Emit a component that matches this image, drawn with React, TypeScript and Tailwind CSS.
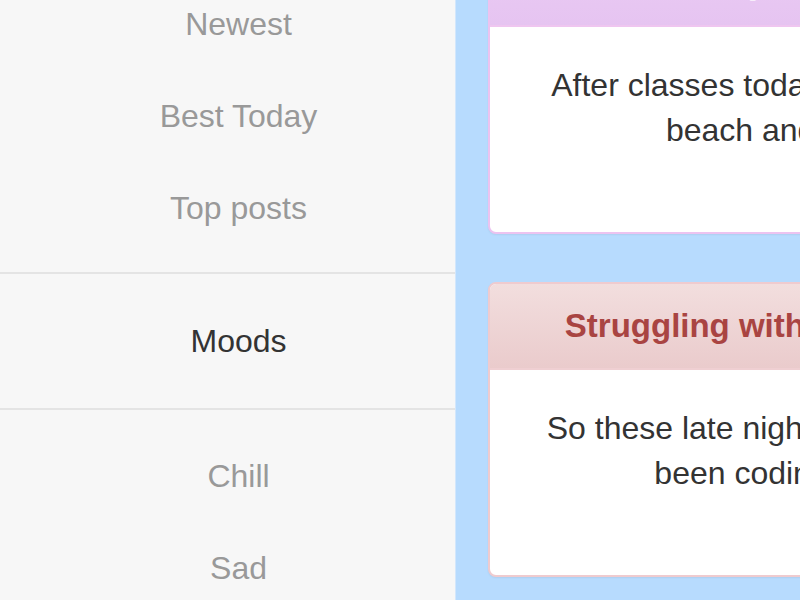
import React from "react";

const font = { fontFamily: '"Liberation Sans", Arial, Helvetica, sans-serif' };

function NavItem({ label, active = false }: { label: string; active?: boolean }) {
  return (
    <div
      className={`h-[92px] flex items-center justify-center pl-[22px] text-[32px] ${
        active ? "text-[#333333]" : "text-[#999999]"
      }`}
    >
      {label}
    </div>
  );
}

function Panel({
  title,
  lines,
  variant,
}: {
  title: string;
  lines: string[];
  variant: "purple" | "red";
}) {
  const purple = variant === "purple";
  return (
    <div
      className={`w-[612px] shrink-0 rounded-[8px] border-2 bg-white overflow-hidden shadow-[0_1px_2px_rgba(0,0,0,0.06)] ${
        purple ? "border-[#ecc3f0]" : "border-[#efcbcf]"
      }`}
    >
      <div
        className={`h-[86px] flex items-center justify-center border-b-2 text-[33px] font-bold whitespace-nowrap ${
          purple
            ? "bg-linear-to-b from-[#ebcdf5] to-[#e6c4f1] border-[#efc6f0] text-white/70"
            : "bg-linear-to-b from-[#f2dede] to-[#eacbcc] border-[#efcfd2] text-[#a94442]"
        }`}
      >
        {title}
      </div>
      <div className="h-[205px] pt-[36px] px-[30px] text-center text-[32px] leading-[45px] text-[#333333] whitespace-nowrap">
        {lines.map((l, i) => (
          <div key={i}>{l}</div>
        ))}
      </div>
    </div>
  );
}

export default function App() {
  return (
    <div className="flex w-[800px] h-[600px] overflow-hidden" style={font}>
      <div className="w-[456px] shrink-0 bg-[#f7f7f7] border-r border-[#d3e7fc] h-full overflow-hidden">
        <div className="-mt-[22px]">
          <div className="pb-[18px]">
            <NavItem label="Newest" />
            <NavItem label="Best Today" />
            <NavItem label="Top posts" />
          </div>
          <div className="border-t-2 border-b-2 border-[#e4e4e4] h-[138px] flex items-center justify-center pl-[22px] text-[32px] text-[#333333]">
            Moods
          </div>
          <div className="pt-[20px]">
            <NavItem label="Chill" />
            <NavItem label="Sad" />
          </div>
        </div>
      </div>
      <div className="flex-1 min-w-0 bg-[#b7dbfe] pl-[32px] overflow-hidden">
        <div className="-mt-[61px] flex flex-col gap-[48px]">
          <Panel
            variant="purple"
            title="Beach day with my gang"
            lines={["After classes today we went to the", "beach and surfed."]}
          />
          <Panel
            variant="red"
            title="Struggling with my deadlines"
            lines={["So these late nights when we have", "been coding tonight"]}
          />
        </div>
      </div>
    </div>
  );
}
